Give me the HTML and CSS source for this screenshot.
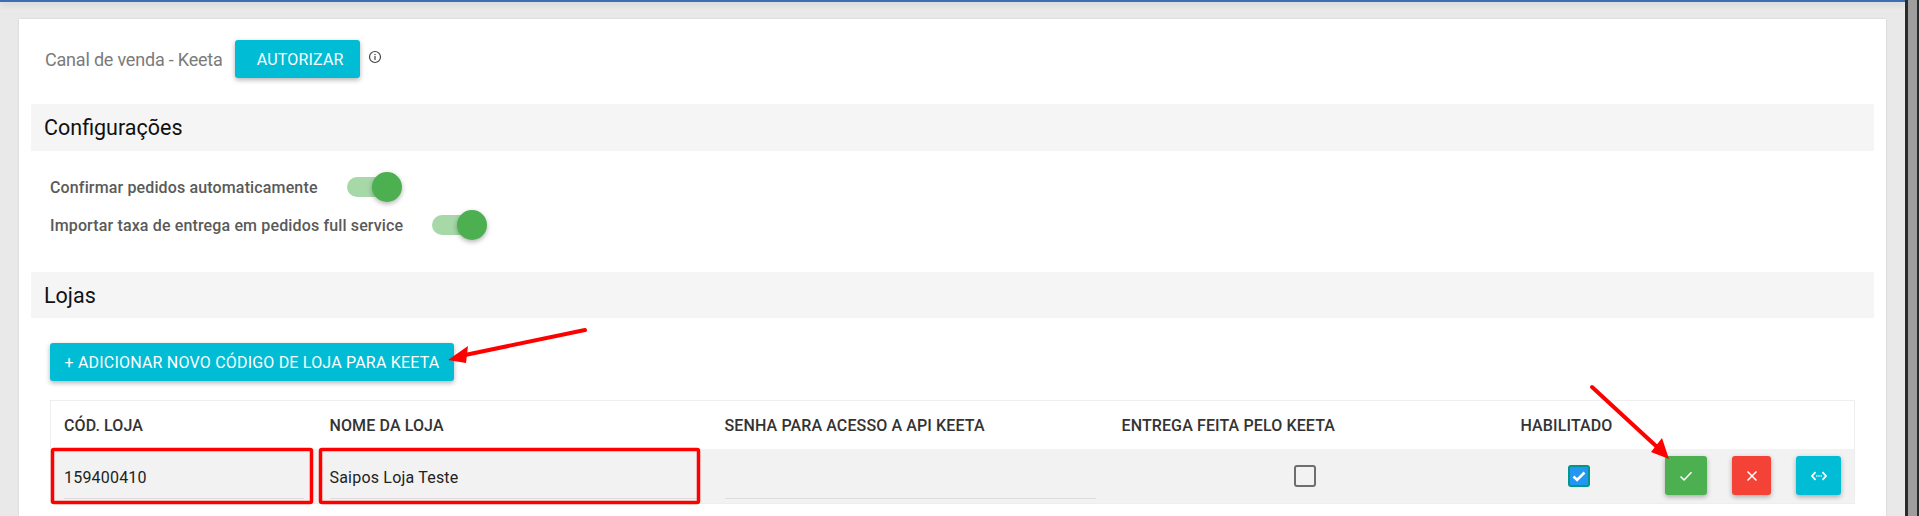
FILE: index.html
```html
<!DOCTYPE html>
<html lang="en">
<head>
  <meta charset="UTF-8">
  <meta name="viewport" content="width=device-width, initial-scale=1.0">
  <title>Canal de venda - Keeta</title>
  <link rel="stylesheet" href="styles.css">
</head>
<body>
  <div class="page">
    <div class="topbar"></div>
    <div class="card">
      <div class="channel">
        <span class="channel-name">Canal de venda - Keeta</span>
        <button class="btn btn-auth">AUTORIZAR</button>
        <svg class="info" width="14" height="14" viewBox="0 0 14 14">
          <circle cx="7" cy="7" r="5.5" fill="none" stroke="#444" stroke-width="1.2"/>
          <rect x="6.4" y="6" width="1.2" height="4" fill="#444"/>
          <rect x="6.4" y="3.9" width="1.2" height="1.2" fill="#444"/>
        </svg>
      </div>

      <div class="section-title">Configurações</div>
      <div class="settings">
        <div class="setting">
          <span>Confirmar pedidos automaticamente</span>
          <span class="toggle"><span class="knob"></span></span>
        </div>
        <div class="setting">
          <span>Importar taxa de entrega em pedidos full service</span>
          <span class="toggle"><span class="knob"></span></span>
        </div>
      </div>

      <div class="section-title lojas">Lojas</div>
      <div class="stores">
        <button class="btn btn-add">+ ADICIONAR NOVO CÓDIGO DE LOJA PARA KEETA</button>
        <table class="store-table">
          <colgroup>
            <col class="col-code">
            <col class="col-name">
            <col class="col-pass">
            <col class="col-delivery">
            <col class="col-enabled">
            <col>
          </colgroup>
          <thead>
            <tr>
              <th>CÓD. LOJA</th>
              <th>NOME DA LOJA</th>
              <th>SENHA PARA ACESSO A API KEETA</th>
              <th>ENTREGA FEITA PELO KEETA</th>
              <th>HABILITADO</th>
              <th></th>
            </tr>
          </thead>
          <tbody>
            <tr>
              <td><div class="field">159400410</div></td>
              <td><div class="field">Saipos Loja Teste</div></td>
              <td><div class="field"></div></td>
              <td class="center delivery"><span class="check"></span></td>
              <td class="center">
                <span class="check checked">
                  <svg width="18" height="18" viewBox="0 0 18 18"><path d="M3.5 9.5l3.6 3.4 7.4-7.4" fill="none" stroke="#fff" stroke-width="2.6"/></svg>
                </span>
              </td>
              <td>
                <div class="actions">
                  <button class="btn icon-btn green">
                    <svg width="14" height="14" viewBox="0 0 14 14"><path d="M1.5 7.5l3.6 3.4 7.4-7.6" fill="none" stroke="#fff" stroke-width="1.5"/></svg>
                  </button>
                  <button class="btn icon-btn red">
                    <svg width="14" height="14" viewBox="0 0 14 14"><path d="M2.5 2.5l9 9M11.5 2.5l-9 9" fill="none" stroke="#fff" stroke-width="1.5"/></svg>
                  </button>
                  <button class="btn icon-btn blue">
                    <svg width="16" height="14" viewBox="0 0 16 14"><path d="M4.5 3.2L1 7l3.5 3.8M11.5 3.2L15 7l-3.5 3.8" fill="none" stroke="#fff" stroke-width="1.8"/><path d="M5.2 7h1.2M7.4 7h1.2M9.6 7h1.2" stroke="#fff" stroke-width="1.5"/></svg>
                  </button>
                </div>
              </td>
            </tr>
          </tbody>
        </table>
      </div>
    </div>
  </div>
  <div class="scrollbar"><div class="scroll-thumb"></div></div>

  <!-- red marks drawn on top of the screenshot -->
  <svg class="marks" width="1919" height="516" viewBox="0 0 1919 516">
    <rect x="52.5" y="449.5" width="259" height="53" rx="1.5" fill="none" stroke="#f00" stroke-width="3.5"/>
    <rect x="320.5" y="449.5" width="378" height="53" rx="1.5" fill="none" stroke="#f00" stroke-width="3.5"/>
    <path d="M585 330L465 355M1592 387L1656 446" fill="none" stroke="#f00" stroke-width="4" stroke-linecap="round"/>
    <path d="M448 360L468 346L466 363Z" fill="#f00"/>
    <path d="M1669 459L1651 452L1662 438Z" fill="#f00"/>
  </svg>
</body>
</html>
```

FILE: styles.css
```css
* {
  box-sizing: border-box;
}

body {
  margin: 0;
  height: 516px;
  display: flex;
  overflow: hidden;
  font-family: Roboto, Arial, sans-serif;
  background-color: #e9e9e9;
}

.page {
  width: 1905px;
}

.topbar {
  height: 2px;
  background-color: #3f6db5;
  box-shadow: 0 2px 6px rgba(0, 0, 0, 0.2);
}

.card {
  height: 497px;
  margin: 17px 19px 0;
  padding: 21px 12px 0;
  background-color: #fff;
  box-shadow: 0 0 2px rgba(0, 0, 0, 0.12);
}

.btn {
  border: none;
  border-radius: 3px;
  color: #fff;
  font-family: inherit;
  font-size: 16px;
  letter-spacing: 0.2px;
  box-shadow: 0 2px 5px rgba(0, 0, 0, 0.3);
}

/* Top row */
.channel {
  display: flex;
  align-items: center;
  height: 38px;
  padding-left: 14px;
}

.channel-name {
  font-size: 18px;
  letter-spacing: -0.2px;
  color: #7b7b7b;
}

.btn-auth {
  width: 125px;
  height: 38px;
  margin-left: 12px;
  padding-left: 22px;
  text-align: left;
  background-color: #00bcd4;
}

.info {
  margin: -4px 0 0 8px;
}

/* Section headers */
.section-title {
  height: 47px;
  margin-top: 26px;
  padding-left: 13px;
  line-height: 48px;
  font-size: 21.5px;
  color: #111;
  background-color: #f5f5f5;
}

.lojas {
  height: 46px;
  margin-top: 0;
}

/* Switches */
.settings {
  height: 121px;
  padding: 17px 19px 0;
}

.setting {
  display: flex;
  align-items: center;
  height: 38px;
  padding-top: 1px;
  font-size: 16px;
  font-weight: 500;
  letter-spacing: 0.14px;
  color: #5a5a5a;
}

.toggle {
  position: relative;
  width: 50px;
  height: 20px;
  margin: -1px 0 0 29px;
  border-radius: 10px;
  background-color: #a6d8a8;
}

.knob {
  position: absolute;
  top: -5px;
  right: -5px;
  width: 30px;
  height: 30px;
  border-radius: 50%;
  background-color: #4caf50;
  box-shadow: 0 2px 5px rgba(0, 0, 0, 0.3);
}

/* Stores */
.stores {
  padding: 25px 19px 0;
}

.btn-add {
  display: block;
  width: 404px;
  height: 38px;
  background-color: #00bcd4;
}

.store-table {
  width: 1805px;
  margin-top: 19px;
  border: 1px solid #eee;
  border-collapse: collapse;
  table-layout: fixed;
}

.col-code {
  width: 266px;
}

.col-name {
  width: 395px;
}

.col-pass {
  width: 397px;
}

.col-delivery {
  width: 399px;
}

.col-enabled {
  width: 143px;
}

th {
  height: 48px;
  padding: 2px 13px 0;
  text-align: left;
  white-space: nowrap;
  font-size: 16px;
  font-weight: 500;
  letter-spacing: 0.12px;
  color: #333;
}

td {
  height: 55px;
  padding: 0 13px;
  font-size: 16px;
  letter-spacing: 0.2px;
  color: #222;
  background-color: #f2f2f2;
}

.center {
  text-align: center;
}

.delivery {
  padding-right: 19px;
}

.field {
  height: 46px;
  padding-top: 15px;
  border-bottom: 1px solid #ddd;
}

.check {
  display: inline-block;
  width: 22px;
  height: 22px;
  vertical-align: middle;
  border: 2px solid #6e6e6e;
  border-radius: 3px;
}

.checked {
  border-color: #009688;
  background-color: #2196f3;
}

.checked svg {
  display: block;
}

.actions {
  display: flex;
  justify-content: flex-end;
  gap: 25px;
}

.icon-btn {
  display: flex;
  align-items: center;
  justify-content: center;
  width: 42px;
  height: 39px;
  padding: 0;
}

.green {
  background-color: #4caf50;
}

.red {
  width: 39px;
  background-color: #f44336;
}

.blue {
  width: 45px;
  background-color: #00bcd4;
}

/* Window edge */
.scrollbar {
  width: 14px;
  height: 516px;
  padding: 0 2px 0 3px;
  background-color: #2b2b2b;
}

.scroll-thumb {
  height: 100%;
  background-color: #9e9e9e;
}

.marks {
  position: absolute;
  top: 0;
  left: 0;
}
```
